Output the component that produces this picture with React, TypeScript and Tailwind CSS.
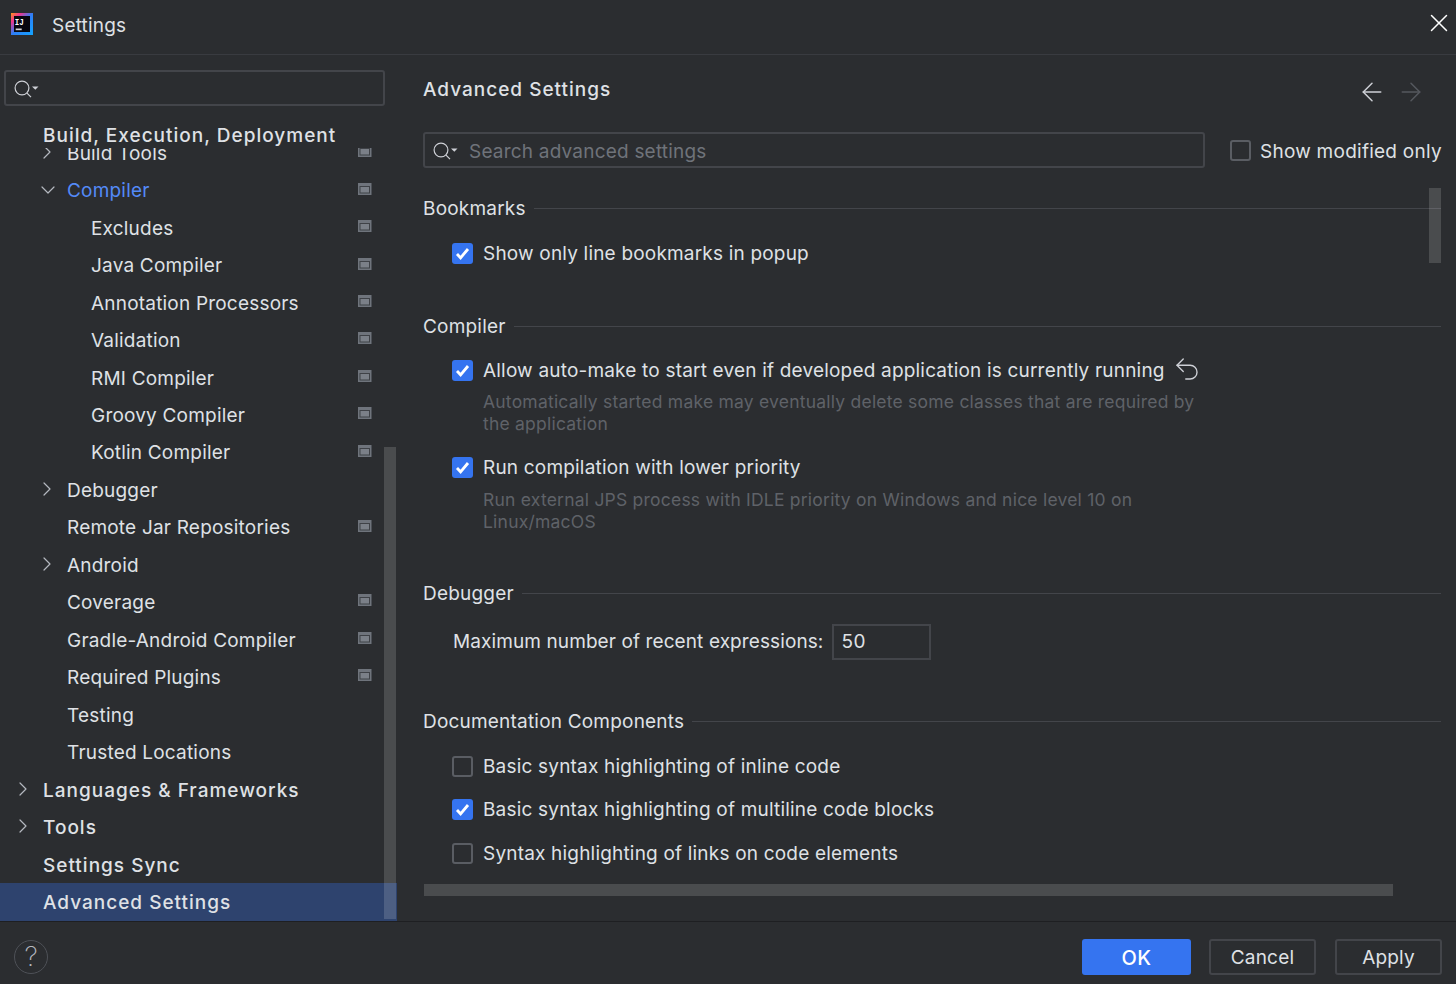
import { ArrowLeft, ArrowRight, ChevronDown, ChevronRight, Undo2, X } from 'lucide-react'

interface TreeRowProps {
  label: string
  indent: number
  arrow?: 'right' | 'down'
  project?: boolean
  bold?: boolean
  active?: boolean
}

const treeRows: TreeRowProps[] = [
  { label: 'Build Tools', indent: 67, arrow: 'right', project: true },
  { label: 'Compiler', indent: 67, arrow: 'down', project: true, active: true },
  { label: 'Excludes', indent: 91, project: true },
  { label: 'Java Compiler', indent: 91, project: true },
  { label: 'Annotation Processors', indent: 91, project: true },
  { label: 'Validation', indent: 91, project: true },
  { label: 'RMI Compiler', indent: 91, project: true },
  { label: 'Groovy Compiler', indent: 91, project: true },
  { label: 'Kotlin Compiler', indent: 91, project: true },
  { label: 'Debugger', indent: 67, arrow: 'right' },
  { label: 'Remote Jar Repositories', indent: 67, project: true },
  { label: 'Android', indent: 67, arrow: 'right' },
  { label: 'Coverage', indent: 67, project: true },
  { label: 'Gradle-Android Compiler', indent: 67, project: true },
  { label: 'Required Plugins', indent: 67, project: true },
  { label: 'Testing', indent: 67 },
  { label: 'Trusted Locations', indent: 67 },
  { label: 'Languages & Frameworks', indent: 43, arrow: 'right', bold: true },
  { label: 'Tools', indent: 43, arrow: 'right', bold: true },
  { label: 'Settings Sync', indent: 43, bold: true },
]

function ProjectIcon() {
  return (
    <svg width="14" height="12" viewBox="0 0 14 12" className="absolute left-[358px] mb-[4px]">
      <rect x="0" y="0" width="13.5" height="12" fill="#6f747c" />
      <rect x="1.5" y="3" width="10.5" height="7.5" fill="#3f4247" />
      <rect x="2.5" y="4" width="8.5" height="5.5" fill="#7b8088" />
    </svg>
  )
}

function SearchIcon() {
  return (
    <svg width="26" height="20" viewBox="0 0 26 20" fill="none" className="shrink-0">
      <circle cx="9" cy="10" r="6.9" stroke="#ced0d6" strokeWidth="1.2" />
      <path d="M14 15.2 18 19.2" stroke="#ced0d6" strokeWidth="1.2" />
      <path d="M19 8.5h6.5l-3.2 3.2z" fill="#ced0d6" />
    </svg>
  )
}

function TreeRow({ label, indent, arrow, project, bold, active }: TreeRowProps) {
  return (
    <div className="relative flex h-[37.45px] shrink-0 items-center">
      {arrow === 'right' && (
        <ChevronRight size={24} strokeWidth={1.2} color="#b4b8bf" className="absolute mb-[2px]" style={{ left: indent - 32 }} />
      )}
      {arrow === 'down' && (
        <ChevronDown size={24} strokeWidth={1.2} color="#b4b8bf" className="absolute mb-[2px]" style={{ left: indent - 31 }} />
      )}
      <span
        className={`whitespace-nowrap text-[19px] ${active ? 'text-[#548af7]' : 'text-[#dfe1e5]'} ${bold ? 'mt-[3px] font-medium tracking-[1px]' : 'mt-[2px] tracking-[0.2px]'}`}
        style={{ marginLeft: indent }}
      >
        {label}
      </span>
      {project && <ProjectIcon />}
    </div>
  )
}

function CheckBox({ checked }: { checked?: boolean }) {
  if (!checked) return <div className="h-[21px] w-[21px] shrink-0 rounded-[3px] border-2 border-[#5a5d63]" />
  return (
    <div className="flex h-[21px] w-[21px] shrink-0 items-center justify-center rounded-[3px] bg-[#3574f0]">
      <svg width="15" height="13" viewBox="0 0 15 13" fill="none">
        <path d="M2 7 5.6 10.8 13 2" stroke="#fff" strokeWidth="2.8" />
      </svg>
    </div>
  )
}

function GroupTitle({ title, className }: { title: string; className: string }) {
  return (
    <div className={`flex items-center gap-2 ${className}`}>
      <span className="mt-[2px] whitespace-nowrap text-[19px] tracking-[0.2px] text-[#dfe1e5]">{title}</span>
      <div className="h-px flex-1 bg-[#43454a]" />
    </div>
  )
}

function CheckRow({ label, checked, className, children }: { label: string; checked?: boolean; className: string; children?: React.ReactNode }) {
  return (
    <div className={`ml-[29px] flex h-[24px] items-center gap-[10px] ${className}`}>
      <CheckBox checked={checked} />
      <span className="mt-[2px] whitespace-nowrap text-[19px] tracking-[0.19px] text-[#dfe1e5]">{label}</span>
      {children}
    </div>
  )
}

function Hint({ lines, className }: { lines: string[]; className: string }) {
  return (
    <div className={`ml-[60px] text-[17.5px] leading-[22px] tracking-[0.22px] text-[#5f6268] ${className}`}>
      {lines.map((line) => (
        <div key={line} className="whitespace-nowrap">
          {line}
        </div>
      ))}
    </div>
  )
}

export default function App() {
  return (
    <div className="flex h-[984px] w-[1456px] flex-col overflow-hidden bg-[#2b2d30] font-['Inter',sans-serif]">
      {/* title bar */}
      <div className="flex h-[55px] shrink-0 items-center border-b border-[#393b40] pl-[11px] pr-[2px]">
        <svg width="22" height="22" viewBox="0 0 22 22" className="mb-[6px] shrink-0">
          <defs>
            <linearGradient id="ij" x1="0" y1="0" x2="1" y2="1">
              <stop offset="0" stopColor="#ff9419" />
              <stop offset="0.22" stopColor="#f0358c" />
              <stop offset="0.5" stopColor="#2f7df6" />
              <stop offset="1" stopColor="#12a5ff" />
            </linearGradient>
          </defs>
          <rect width="22" height="22" fill="url(#ij)" />
          <rect x="3" y="3" width="16" height="16" fill="#07070f" />
          <text x="3.8" y="11.5" fontSize="9" fontWeight="700" fill="#fff" fontFamily="Liberation Mono, monospace" textLength="9" lengthAdjust="spacingAndGlyphs">IJ</text>
          <rect x="4.7" y="15.5" width="6" height="1.7" fill="#d6d6d6" />
        </svg>
        <span className="mb-[2px] ml-[19px] text-[19px] tracking-[0.2px] text-[#dfe1e5]">Settings</span>
        <X size={30} strokeWidth={1.2} color="#fff" className="mb-[8px] ml-auto" />
      </div>

      <div className="flex min-h-0 flex-1">
        {/* left tree */}
        <div className="relative flex w-[397px] shrink-0 flex-col overflow-hidden">
          <div className="ml-[4px] mt-[15px] flex h-[36px] w-[381px] shrink-0 items-center rounded-[3px] border-2 border-[#43454a] pl-[7px]">
            <SearchIcon />
          </div>
          <div className="relative mt-[13px] flex min-h-0 flex-1 flex-col overflow-hidden">
            <div className="h-[15.5px] shrink-0" />
            {treeRows.map((row) => (
              <TreeRow key={row.label} {...row} />
            ))}
            <div className="flex h-[39px] shrink-0 items-center bg-[#2e436e] pl-[43px]">
              <span className="whitespace-nowrap text-[19px] font-medium tracking-[1px] text-[#dfe1e5]">Advanced Settings</span>
            </div>
            <div className="absolute left-0 top-0 flex h-[29px] w-full items-center bg-[#2b2d30] pl-[43px] pt-[5px]">
              <span className="whitespace-nowrap text-[19px] font-medium tracking-[1px] text-[#dfe1e5]">
                Build, Execution, Deployment
              </span>
            </div>
          </div>
          <div className="absolute bottom-[2px] left-[384px] h-[472px] w-[12px] bg-white/15" />
        </div>

        {/* right panel */}
        <div className="relative min-w-0 flex-1 pl-[26px] pr-[15px]">
          <div className="mt-[20px] flex h-[30px] items-center">
            <span className="text-[19px] font-medium tracking-[1px] text-[#dfe1e5]">Advanced Settings</span>
            <ArrowLeft size={30} strokeWidth={1.2} color="#ced0d6" className="ml-auto mt-[4px]" />
            <ArrowRight size={30} strokeWidth={1.2} color="#55585e" className="ml-[9px] mr-[15px] mt-[4px]" />
          </div>
          <div className="mt-[27px] flex h-[36px] items-center">
            <div className="flex h-[36px] w-[782px] shrink-0 items-center rounded-[3px] border-2 border-[#43454a] pl-[7px]">
              <SearchIcon />
              <span className="ml-[11px] mt-[4px] text-[19px] tracking-[0.2px] text-[#6f737a]">Search advanced settings</span>
            </div>
            <div className="ml-[25px]">
              <CheckBox />
            </div>
            <span className="ml-[9px] mt-[4px] whitespace-nowrap text-[19px] tracking-[0.25px] text-[#dfe1e5]">Show modified only</span>
          </div>

          <GroupTitle title="Bookmarks" className="mt-[28px] h-[24px]" />
          <CheckRow label="Show only line bookmarks in popup" checked className="mt-[21px]" />

          <GroupTitle title="Compiler" className="mt-[49px] h-[24px]" />
          <CheckRow label="Allow auto-make to start even if developed application is currently running" checked className="mt-[20px]">
            <Undo2 size={30} strokeWidth={1.1} color="#ced0d6" className="-ml-[3px] mb-[3px]" />
          </CheckRow>
          <Hint
            className="mt-[9px]"
            lines={['Automatically started make may eventually delete some classes that are required by', 'the application']}
          />
          <CheckRow label="Run compilation with lower priority" checked className="mt-[20px]" />
          <Hint
            className="mt-[10px]"
            lines={['Run external JPS process with IDLE priority on Windows and nice level 10 on', 'Linux/macOS']}
          />

          <GroupTitle title="Debugger" className="mt-[48px] h-[24px]" />
          <div className="ml-[30px] mt-[18px] flex h-[37px] items-center gap-[9px]">
            <span className="mt-[2px] whitespace-nowrap text-[19px] tracking-[0.1px] text-[#dfe1e5]">Maximum number of recent expressions:</span>
            <div className="flex h-[36px] w-[99px] items-center border-2 border-[#43454a] pl-[7px] text-[19px] tracking-[0.5px] text-[#dfe1e5]">
              <span className="mt-[2px]">50</span>
            </div>
          </div>

          <GroupTitle title="Documentation Components" className="mt-[49px] h-[24px]" />
          <CheckRow label="Basic syntax highlighting of inline code" className="mt-[21px]" />
          <CheckRow label="Basic syntax highlighting of multiline code blocks" checked className="mt-[19px]" />
          <CheckRow label="Syntax highlighting of links on code elements" className="mt-[20px]" />

          {/* overlay scrollbars */}
          <div className="absolute left-[1032px] top-[133px] h-[75px] w-[12px] bg-white/15" />
          <div className="absolute left-[27px] top-[829px] h-[12px] w-[969px] bg-white/15" />
        </div>
      </div>

      {/* footer */}
      <div className="flex h-[63px] shrink-0 items-center border-t border-[#1e1f22] pl-[14px] pr-[14px] pt-[8px]">
        <div className="flex h-[34px] w-[34px] items-center justify-center rounded-full border-[1.5px] border-[#4e5157] text-[27px] font-extralight text-[#b4b8bf]">
          ?
        </div>
        <button className="ml-auto h-[36px] w-[109px] rounded-[3px] bg-[#3574f0] pt-[2px] text-[20px] font-medium tracking-[0.5px] text-white">OK</button>
        <button className="ml-[18px] h-[36px] w-[107px] rounded-[3px] border-2 border-[#43454a] pt-[3px] text-[19px] tracking-[0.2px] text-[#dfe1e5]">Cancel</button>
        <button className="ml-[19px] h-[36px] w-[107px] rounded-[3px] border-2 border-[#43454a] pt-[3px] text-[19px] tracking-[0.2px] text-[#dfe1e5]">Apply</button>
      </div>
    </div>
  )
}
